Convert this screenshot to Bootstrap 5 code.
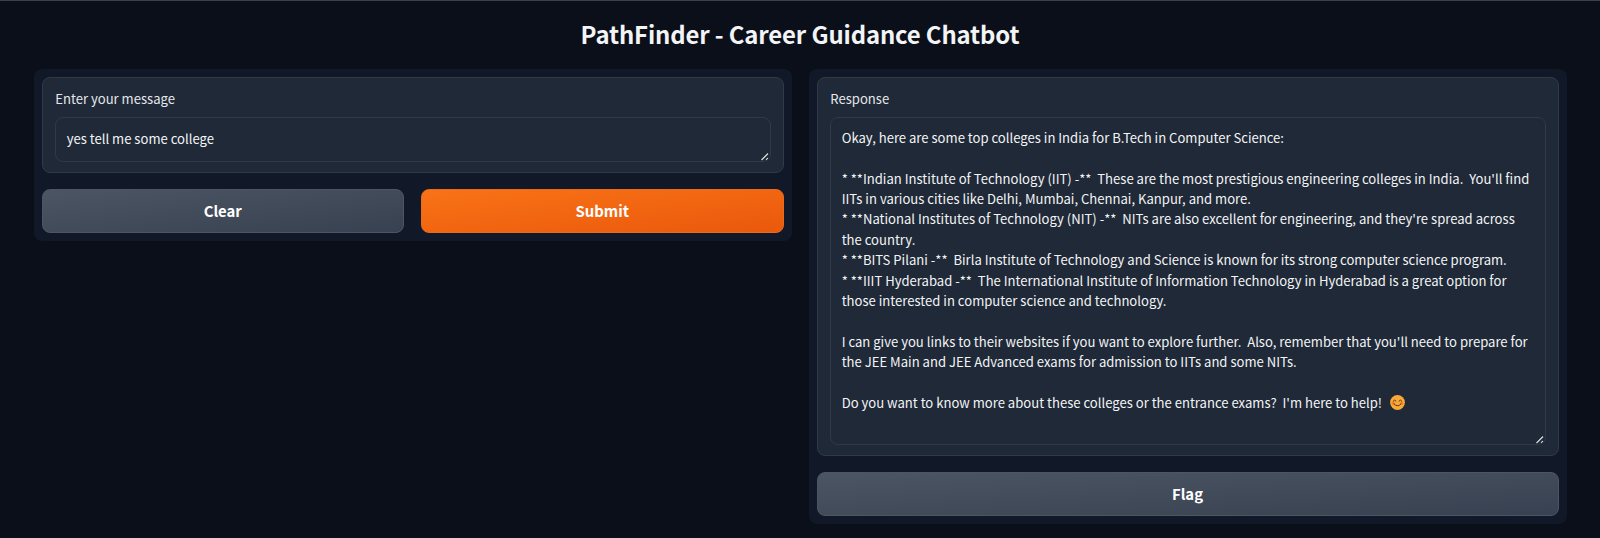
<!DOCTYPE html>
<html lang="en" data-bs-theme="dark">
<head>
<meta charset="utf-8">
<meta name="viewport" content="width=device-width, initial-scale=1">
<title>PathFinder - Career Guidance Chatbot</title>
<link href="https://cdn.jsdelivr.net/npm/bootstrap@5.3.0/dist/css/bootstrap.min.css" rel="stylesheet">
<style>
  body { background: #0b0f19; color: #f3f4f6; font-family: "Noto Sans CJK SC", sans-serif; font-size: 13.08px; line-height: 20.4px; height: 538px; overflow: hidden; border-top: 1px solid #3a4145; }
  .app { padding: 0 33.5px; }
  .app-title { font-size: 23.9px; letter-spacing: -.13px; line-height: 36px; font-weight: 700; padding-top: 15px; height: 68px; color: #f3f4f6; }
  .app-grid { gap: 17px; }
  .panel { flex: 1 1 0; min-width: 0; background: #111827; border-radius: 8px; padding: 8px; }
  .block { background: #1f2937; border: 1px solid #2f3a48; border-radius: 8px; padding: 11px 12px 10px; margin-bottom: 16px; }
  .block-label { height: 28px; line-height: 20px; color: #e5e7eb; padding-left: .8px; }
  .box { border: 1px solid #2f3a48; border-radius: 8px; padding: 9.7px 10px 9px 11.2px; white-space: pre; overflow: hidden; }
  .box-message { height: 45px; padding-top: 11px; }
  .box-response { height: 328px; }
  .grip { right: 1px; bottom: 0; }
  .btn-app { flex: 1 1 0; height: 43.5px; border-radius: 8px; border: 1px solid #4b5563; color: #fff; font-size: 14.9px; font-weight: 700; line-height: 24px; padding: 0; background: linear-gradient(to bottom right, #4b5563, #374151); }
  .btn-go { border-color: #ea6a1c; background: linear-gradient(to bottom right, #f97316, #ea580c); }
  .smile { vertical-align: -2px; margin-left: 2px; }
</style>
</head>
<body>
<main class="app">
  <h1 class="app-title text-center mb-0">PathFinder - Career Guidance Chatbot</h1>
  <div class="app-grid d-flex align-items-start">
    <section class="panel">
      <div class="block">
        <div class="block-label">Enter your message</div>
        <div class="box box-message position-relative">yes tell me some college<svg class="grip position-absolute" width="9" height="9" viewBox="0 0 9 9" fill="none"><path d="M1 7.5 7.5 1M5 8 8 5" stroke="#0b0f19" stroke-width="1"/><path d="M1.5 8 8 1.5M6 8 8 6" stroke="#d8dbe0" stroke-width="1.3"/></svg></div>
      </div>
      <div class="app-grid d-flex">
        <button class="btn btn-app" type="button">Clear</button>
        <button class="btn btn-app btn-go" type="button">Submit</button>
      </div>
    </section>
    <section class="panel">
      <div class="block">
        <div class="block-label">Response</div>
        <div class="box box-response position-relative">Okay, here are some top colleges in India for B.Tech in Computer Science:

* **Indian Institute of Technology (IIT) -**  These are the most prestigious engineering colleges in India.  You'll find
IITs in various cities like Delhi, Mumbai, Chennai, Kanpur, and more.
* **National Institutes of Technology (NIT) -**  NITs are also excellent for engineering, and they're spread across
the country.
* **BITS Pilani -**  Birla Institute of Technology and Science is known for its strong computer science program.
* **IIIT Hyderabad -**  The International Institute of Information Technology in Hyderabad is a great option for
those interested in computer science and technology.

I can give you links to their websites if you want to explore further.  Also, remember that you'll need to prepare for
the JEE Main and JEE Advanced exams for admission to IITs and some NITs.

Do you want to know more about these colleges or the entrance exams?  I'm here to help!  <svg class="smile" width="15" height="15" viewBox="0 0 15 15" fill="none"><circle cx="7.5" cy="7.5" r="7.4" fill="#f9a938"/><circle cx="3.3" cy="8.2" r="1.7" fill="#f58220"/><circle cx="11.7" cy="8.2" r="1.7" fill="#f58220"/><path d="M3.2 6.1Q4.6 3.8 6 6.1M9 6.1Q10.4 3.8 11.8 6.1M4 9Q7.5 12.7 11 9" stroke="#4d3928" stroke-width="1" stroke-linecap="round"/></svg><svg class="grip position-absolute" width="9" height="9" viewBox="0 0 9 9" fill="none"><path d="M1 7.5 7.5 1M5 8 8 5" stroke="#0b0f19" stroke-width="1"/><path d="M1.5 8 8 1.5M6 8 8 6" stroke="#d8dbe0" stroke-width="1.3"/></svg></div>
      </div>
      <div class="d-flex">
        <button class="btn btn-app" type="button">Flag</button>
      </div>
    </section>
  </div>
</main>
<script src="https://cdn.jsdelivr.net/npm/bootstrap@5.3.0/dist/js/bootstrap.bundle.min.js"></script>
</body>
</html>
